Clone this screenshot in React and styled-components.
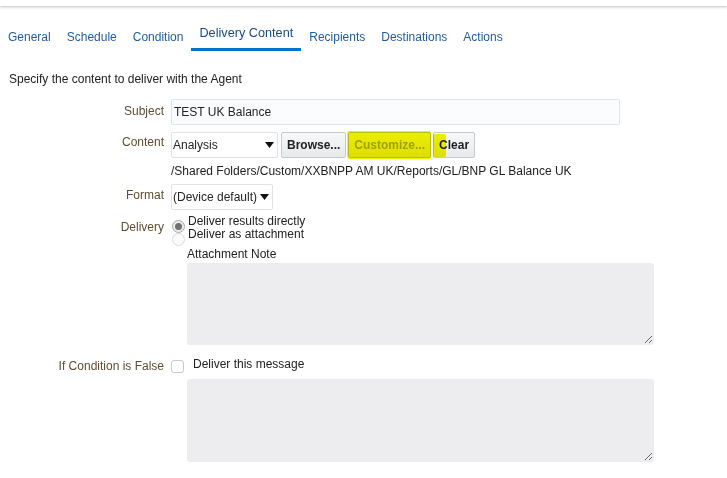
import React, { useState } from "react";
import styled, { createGlobalStyle } from "styled-components";

const GlobalStyle = createGlobalStyle`
  body {
    margin: 0;
    background: #ffffff;
    font-family: "Liberation Sans", Arial, sans-serif;
    font-size: 12px;
    color: #252525;
  }
`;

const Page = styled.div`
  width: 727px;
  min-height: 478px;
  background: #ffffff;
`;

const TopShade = styled.div`
  height: 6px;
  background: #ffffff;
  box-shadow: 0 1px 3px rgba(0, 0, 0, 0.25);
`;

const TabBar = styled.div`
  display: flex;
  align-items: flex-end;
  height: 27px;
  margin-top: 18px;
`;

const Tab = styled.div`
  box-sizing: border-box;
  height: 27px;
  display: flex;
  align-items: flex-end;
  padding: 0 8px 7px;
  font-size: ${(p) => (p.$active ? "12.7px" : "12px")};
  line-height: ${(p) => (p.$active ? "15px" : "14px")};
  color: ${(p) => (p.$active ? "#1b4a83" : "#1f5c9c")};
  border-bottom: ${(p) => (p.$active ? "3px solid #0572ce" : "none")};
  cursor: pointer;
  white-space: nowrap;
`;

const Intro = styled.div`
  margin-top: 21px;
  padding-left: 9px;
  line-height: 14px;
  color: #222;
`;

const Row = styled.div`
  display: grid;
  grid-template-columns: 164px auto;
  column-gap: 7px;
  align-items: start;
  margin-top: ${(p) => p.$mt}px;
`;

const Label = styled.div`
  text-align: right;
  line-height: 14px;
  padding-top: ${(p) => p.$pt || 0}px;
  color: #5e4d30;
  white-space: nowrap;
`;

const Field = styled.div`
  grid-column: 2;
  display: flex;
  flex-direction: column;
  align-items: flex-start;
`;

const Inline = styled.div`
  display: flex;
  align-items: ${(p) => p.$align || "center"};
  gap: ${(p) => p.$gap || 0}px;
  margin-left: ${(p) => p.$ml || 0}px;
`;

const TextInput = styled.input`
  box-sizing: border-box;
  width: 449px;
  height: 26px;
  padding: 0 2px;
  border: 1px solid #e0e4e8;
  border-radius: 2px;
  background: #fbfcfd;
  font-family: inherit;
  font-size: 12px;
  color: #252525;
  outline: none;
`;

const SelectBox = styled.div`
  box-sizing: border-box;
  height: 26px;
  width: ${(p) => (p.$width ? `${p.$width}px` : "auto")};
  display: flex;
  align-items: center;
  justify-content: ${(p) => (p.$width ? "space-between" : "flex-start")};
  gap: 3px;
  padding: 0 3px 0 1px;
  border: 1px solid #dfe3e7;
  border-radius: 2px;
  background: #ffffff;
  color: #252525;
  cursor: pointer;
`;

const Button = styled.button`
  position: relative;
  box-sizing: border-box;
  height: 26px;
  padding: 0 5px;
  border: 1px solid #c4cad0;
  border-radius: 2px;
  background: linear-gradient(#f7f8f9, #e7e9eb);
  font-family: inherit;
  font-size: 12px;
  font-weight: bold;
  color: ${(p) => (p.disabled ? "#a9a9a9" : "#222")};
  cursor: ${(p) => (p.disabled ? "default" : "pointer")};
`;

const Marker = styled.span`
  position: absolute;
  top: ${(p) => p.$top}px;
  bottom: ${(p) => p.$bottom}px;
  left: ${(p) => p.$left}px;
  right: ${(p) => (p.$right === undefined ? "auto" : `${p.$right}px`)};
  width: ${(p) => (p.$width ? `${p.$width}px` : "auto")};
  background: #f4f400;
  mix-blend-mode: multiply;
  border-radius: 2px;
  pointer-events: none;
`;

const PathText = styled.div`
  line-height: 14px;
  color: #222;
`;

const OptionsRow = styled.div`
  display: flex;
  align-items: flex-start;
  gap: 3px;
  height: 26px;
  margin-left: 1px;
`;

const RadioStack = styled.div`
  display: flex;
  flex-direction: column;
  padding-top: 5px;
`;

const Radio = styled.span`
  box-sizing: border-box;
  width: 13px;
  height: 13px;
  border-radius: 50%;
  display: flex;
  align-items: center;
  justify-content: center;
  border: 1px solid ${(p) => (p.$checked ? "#a8a8a8" : "#dadada")};
  background: ${(p) => (p.$checked ? "#ececec" : "#fbfbfb")};
  &::after {
    content: "";
    width: 7px;
    height: 7px;
    border-radius: 50%;
    background: ${(p) => (p.$checked ? "#707070" : "transparent")};
  }
`;

const OptionText = styled.div`
  line-height: 13px;
  color: #222;
`;

const SubLabel = styled.div`
  margin: 6px 0 0 16px;
  line-height: 14px;
  color: #222;
`;

const Note = styled.textarea`
  display: block;
  box-sizing: border-box;
  width: 467px;
  height: ${(p) => p.$h}px;
  margin: ${(p) => p.$mt}px 0 0 16px;
  border: 1px solid #ececee;
  border-radius: 3px;
  background: #ededef;
  font-family: inherit;
  font-size: 12px;
  outline: none;
`;

const Checkbox = styled.span`
  box-sizing: border-box;
  width: 13px;
  height: 13px;
  margin-top: 3px;
  border: 1px solid #c9c9c9;
  border-radius: 3px;
  background: #fff;
`;

const CheckText = styled.div`
  line-height: 14px;
  color: #222;
`;

const Arrow = () => (
  <svg width="9" height="6" viewBox="0 0 9 6">
    <polygon points="0,0 9,0 4.5,6" fill="#111" />
  </svg>
);

const tabs = [
  "General",
  "Schedule",
  "Condition",
  "Delivery Content",
  "Recipients",
  "Destinations",
  "Actions",
];

const App = () => {
  const [active, setActive] = useState("Delivery Content");

  return (
    <Page>
      <GlobalStyle />
      <TopShade />
      <TabBar>
        {tabs.map((t) => (
          <Tab key={t} $active={t === active} onClick={() => setActive(t)}>
            {t}
          </Tab>
        ))}
      </TabBar>

      <Intro>Specify the content to deliver with the Agent</Intro>

      <Row $mt={13}>
        <Label $pt={5}>Subject</Label>
        <Field>
          <TextInput defaultValue="TEST UK Balance" />
        </Field>
      </Row>

      <Row $mt={7}>
        <Label $pt={3}>Content</Label>
        <Field>
          <Inline>
            <SelectBox $width={107}>
              <span>Analysis</span>
              <Arrow />
            </SelectBox>
            <Inline $gap={2} $ml={3}>
              <Button>Browse...</Button>
              <Button disabled>
                Customize...
                <Marker $top={-2} $bottom={-2} $left={-2} $right={-1} />
              </Button>
              <Button>
                Clear
                <Marker $top={1} $bottom={0} $left={-1} $width={13} />
              </Button>
            </Inline>
          </Inline>
        </Field>
      </Row>

      <Row $mt={6}>
        <Field>
          <PathText>/Shared Folders/Custom/XXBNPP AM UK/Reports/GL/BNP GL Balance UK</PathText>
        </Field>
      </Row>

      <Row $mt={6}>
        <Label $pt={4}>Format</Label>
        <Field>
          <SelectBox>
            <span>(Device default)</span>
            <Arrow />
          </SelectBox>
        </Field>
      </Row>

      <Row $mt={5}>
        <Label $pt={5}>Delivery</Label>
        <Field>
          <OptionsRow>
            <RadioStack>
              <Radio $checked />
              <Radio />
            </RadioStack>
            <div>
              <OptionText>Deliver results directly</OptionText>
              <OptionText>Deliver as attachment</OptionText>
            </div>
          </OptionsRow>
          <SubLabel>Attachment Note</SubLabel>
          <Note $h={82} $mt={2} />
        </Field>
      </Row>

      <Row $mt={12}>
        <Label $pt={2}>If Condition is False</Label>
        <Field>
          <Inline $gap={9} $align="flex-start">
            <Checkbox />
            <CheckText>Deliver this message</CheckText>
          </Inline>
          <Note $h={83} $mt={6} />
        </Field>
      </Row>
    </Page>
  );
};

export default App;
